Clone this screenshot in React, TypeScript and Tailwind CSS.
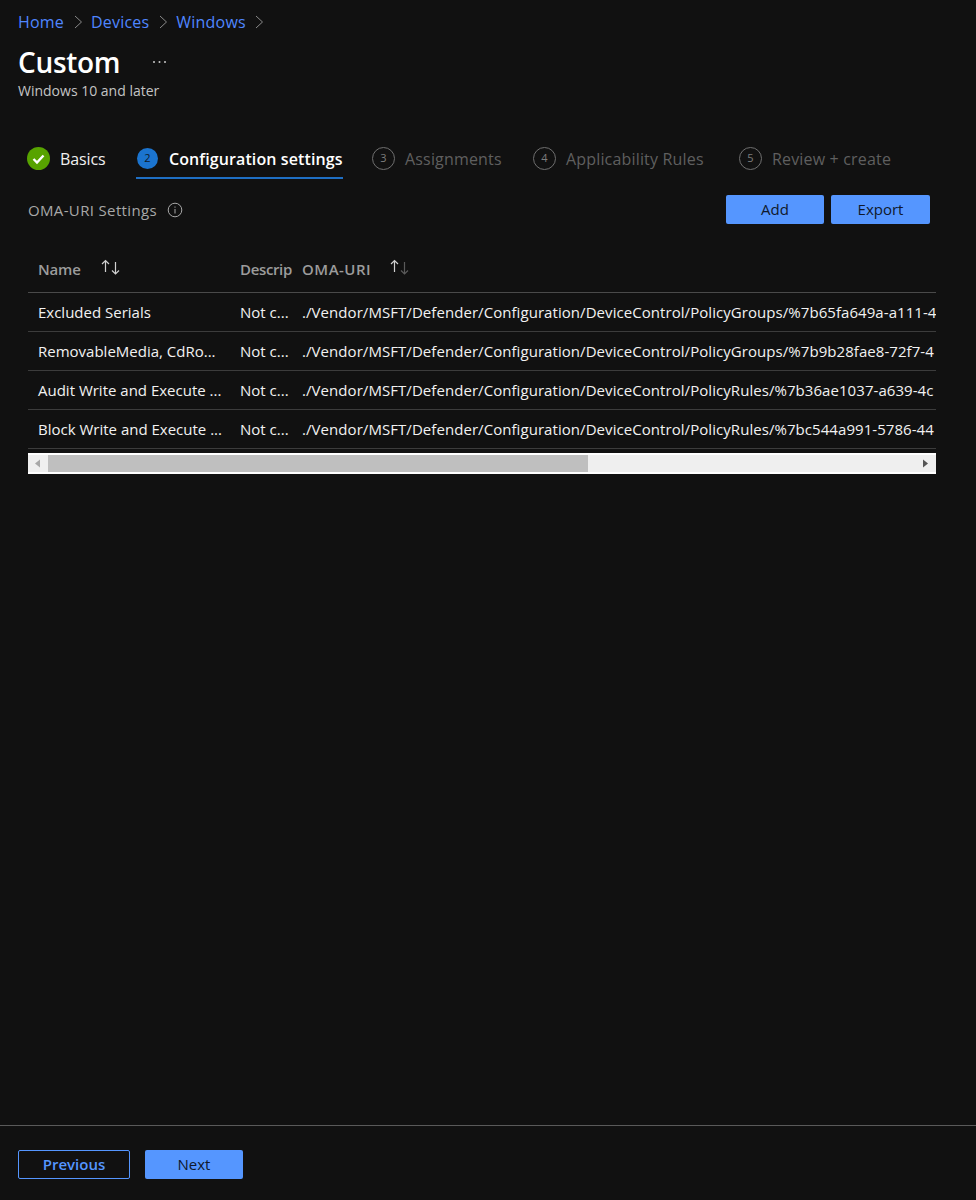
const font = { fontFamily: '"Open Sans", "Noto Sans", sans-serif' };

function Chevron() {
  return (
    <svg width="10" height="14" viewBox="0 0 10 14" fill="none" stroke="#8a8a8a" strokeWidth="1" className="mx-[8.5px]">
      <path d="M2 1l6.5 6L2 13" />
    </svg>
  );
}

function Sort({ dim }: { dim?: boolean }) {
  return (
    <svg width="22" height="18" viewBox="0 0 22 18" fill="none" strokeWidth="1.2">
      <path d="M5.5 14V2.5M2 6l3.5-3.5L9 6" stroke="#d0d0d0" />
      <path d="M15.5 4v12M12 12.5l3.5 3.5 3.5-3.5" stroke={dim ? "#5a5a5a" : "#d0d0d0"} />
    </svg>
  );
}

function Step({ n, label, width }: { n: number; label: string; width: string }) {
  return (
    <div className={`flex items-center ${width}`}>
      <span className="w-[23px] h-[23px] rounded-full border border-[#6f6f6f] text-[#7d7d7d] text-[11px] flex items-center justify-center shrink-0">
        {n}
      </span>
      <span className="ml-[10px] mt-[2px] text-[16px] tracking-[0.17px] text-[#5f5f5f] whitespace-nowrap">{label}</span>
    </div>
  );
}

const rows = [
  ["Excluded Serials", "./Vendor/MSFT/Defender/Configuration/DeviceControl/PolicyGroups/%7b65fa649a-a111-4"],
  ["RemovableMedia, CdRo...", "./Vendor/MSFT/Defender/Configuration/DeviceControl/PolicyGroups/%7b9b28fae8-72f7-4"],
  ["Audit Write and Execute ...", "./Vendor/MSFT/Defender/Configuration/DeviceControl/PolicyRules/%7b36ae1037-a639-4c"],
  ["Block Write and Execute ...", "./Vendor/MSFT/Defender/Configuration/DeviceControl/PolicyRules/%7bc544a991-5786-44"],
];

export default function App() {
  return (
    <div style={font} className="w-[976px] h-[1200px] bg-[#111111] flex flex-col overflow-hidden text-white">
      <div className="flex-1 min-h-0 flex flex-col">
        <nav className="flex items-center h-[20px] mt-[12px] ml-[18px] text-[16px] tracking-[0.2px] text-[#4f86ff]">
          <span>Home</span>
          <Chevron />
          <span>Devices</span>
          <Chevron />
          <span>Windows</span>
          <Chevron />
        </nav>
        <div className="flex items-center ml-[18px] mt-[10px] h-[40px]">
          <h1 className="text-[28px] leading-[40px] font-semibold tracking-[-0.3px] text-white">Custom</h1>
          <svg width="15" height="4" viewBox="0 0 15 4" fill="#c8c8c8" className="ml-[32px]">
            <circle cx="2" cy="2" r="1" />
            <circle cx="7.5" cy="2" r="1" />
            <circle cx="13" cy="2" r="1" />
          </svg>
        </div>
        <p className="ml-[18px] text-[14px] leading-[18px] text-[#c4c4c4]">Windows 10 and later</p>

        <div className="flex items-start ml-[27px] mt-[44px] h-[35px]">
          <div className="flex items-center w-[109px] h-[28px]">
            <svg width="23" height="23" viewBox="0 0 23 23" className="shrink-0">
              <circle cx="11.5" cy="11.5" r="11.5" fill="#57a300" />
              <path d="M6.5 12l3.5 3.5 6.5-7" fill="none" stroke="#fff" strokeWidth="2.4" />
            </svg>
            <span className="ml-[10px] mt-[2px] text-[16px] tracking-[-0.1px] text-[#f0f0f0]">Basics</span>
          </div>
          <div className="flex items-center w-[207px] h-[35px] pb-[5px] border-b-2 border-[#1f6fc4] mr-[29px]">
            <span className="w-[21px] h-[21px] ml-[1px] rounded-full bg-[#1b74cf] text-[#0d1a2b] text-[11px] flex items-center justify-center shrink-0">2</span>
            <span className="ml-[11px] mt-[2px] text-[16px] font-semibold tracking-[0.1px] text-white whitespace-nowrap">Configuration settings</span>
          </div>
          <div className="flex h-[28px]">
            <Step n={3} label="Assignments" width="w-[161px]" />
            <Step n={4} label="Applicability Rules" width="w-[206px]" />
            <Step n={5} label="Review + create" width="w-[160px]" />
          </div>
        </div>

        <div className="flex items-center justify-between ml-[28px] mr-[46px] mt-[16px] h-[29px]">
          <div className="flex items-center mt-[1px]">
            <span className="text-[15px] tracking-[0.35px] text-[#a8a8a8]">OMA-URI Settings</span>
            <svg width="16" height="16" viewBox="0 0 16 16" fill="none" stroke="#a8a8a8" className="ml-[10px]">
              <circle cx="8" cy="8" r="6.8" />
              <path d="M8 7v4.5M8 4.5v1.2" />
            </svg>
          </div>
          <div className="flex gap-[7px]">
            <button className="w-[98px] h-[29px] pb-[1px] rounded-[2px] bg-[#5596ff] text-[#10192b] text-[15px] font-medium">Add</button>
            <button className="w-[99px] h-[29px] pb-[1px] rounded-[2px] bg-[#5596ff] text-[#10192b] text-[15px] font-medium">Export</button>
          </div>
        </div>

        <div className="ml-[28px] w-[908px] mt-[20px] overflow-hidden">
          <div className="flex h-[49px] pt-[2px] items-center border-b border-[#4a4a4a] text-[15px] font-semibold text-[#9c9c9c]">
            <div className="w-[212px] pl-[10px] flex items-center tracking-[-0.2px]">
              <span>Name</span>
              <span className="ml-[19px] -mt-[5px]"><Sort /></span>
            </div>
            <div className="w-[62px] overflow-hidden tracking-[-0.35px]">Descrip</div>
            <div className="flex items-center tracking-[0.5px]">
              <span>OMA-URI</span>
              <span className="ml-[18px] -mt-[5px]"><Sort dim /></span>
            </div>
          </div>
          {rows.map(([name, uri]) => (
            <div key={name} className="flex h-[39px] items-center border-b border-[#3c3c3c] text-[15px] text-[#f2f2f2] whitespace-nowrap">
              <div className="w-[212px] pl-[10px] overflow-hidden">{name}</div>
              <div className="w-[62px]">Not c...</div>
              <div className="flex-1 min-w-0 overflow-hidden tracking-[0.06px]">{uri}</div>
            </div>
          ))}
        </div>
        <div className="ml-[28px] w-[908px] h-[21px] mt-[4px] bg-[#efefef] border-y-2 border-white flex items-center">
          <svg width="20" height="17" viewBox="0 0 20 17" className="shrink-0"><path d="M12 4.5v8l-5-4z" fill="#a8a8a8" /></svg>
          <div className="w-[540px] h-full bg-[#bfbfbf]" />
          <div className="flex-1" />
          <svg width="20" height="17" viewBox="0 0 20 17" className="shrink-0"><path d="M7 4.5v8l5-4z" fill="#555555" /></svg>
        </div>
      </div>

      <footer className="h-[75px] border-t border-[#5a5a5a] flex items-start pl-[18px] pt-[24px] gap-[15px] shrink-0">
        <button className="w-[112px] h-[29px] pb-[1px] rounded-[2px] border border-[#5596ff] text-[#5596ff] text-[15px] font-semibold">Previous</button>
        <button className="w-[98px] h-[29px] pb-[1px] rounded-[2px] bg-[#5596ff] text-[#10192b] text-[15px] font-medium">Next</button>
      </footer>
    </div>
  );
}
